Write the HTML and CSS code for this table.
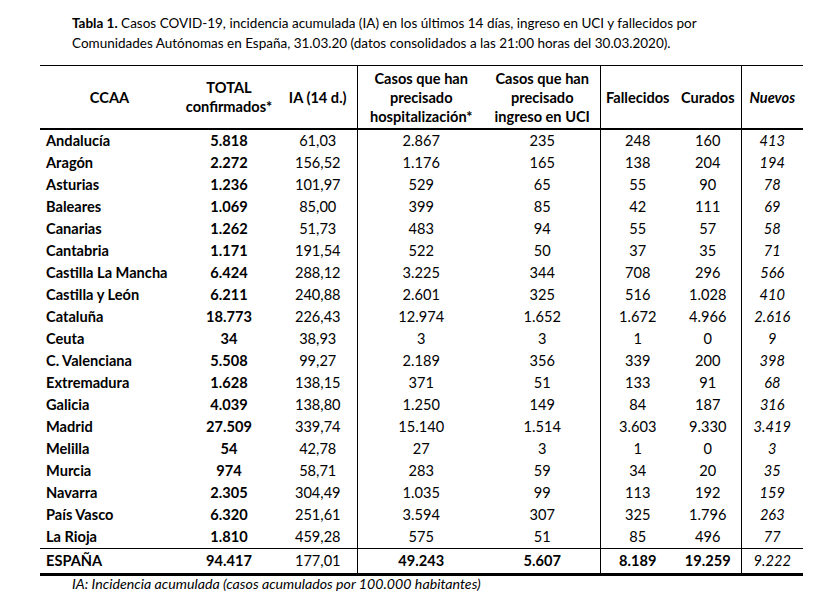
FILE: index.html
```html
<!DOCTYPE html>
<html lang="es">
<head>
<meta charset="utf-8">
<title>Tabla 1</title>
<link rel="stylesheet" href="styles.css">
</head>
<body>
<div class="page">
  <p class="caption"><b>Tabla 1.</b> Casos COVID-19, incidencia acumulada (IA) en los últimos 14 días, ingreso en UCI y fallecidos por<br>Comunidades Autónomas en España, 31.03.20 (datos consolidados a las 21:00 horas del 30.03.2020).</p>
  <table class="covid">
    <colgroup>
      <col class="c-ccaa"><col class="c-total"><col class="c-ia"><col class="c-hosp"><col class="c-uci"><col class="c-fall"><col class="c-cur"><col class="c-nue">
    </colgroup>
    <thead>
      <tr>
        <th>CCAA</th>
        <th>TOTAL<br>confirmados*</th>
        <th class="sep">IA (14 d.)</th>
        <th>Casos que han<br>precisado<br>hospitalización*</th>
        <th class="sep">Casos que han<br>precisado<br>ingreso en UCI</th>
        <th>Fallecidos</th>
        <th class="sep">Curados</th>
        <th class="nue">Nuevos</th>
      </tr>
    </thead>
    <tbody>
      <tr><td>Andalucía</td><td>5.818</td><td class="sep">61,03</td><td>2.867</td><td class="sep">235</td><td>248</td><td class="sep">160</td><td class="nue">413</td></tr>
      <tr><td>Aragón</td><td>2.272</td><td class="sep">156,52</td><td>1.176</td><td class="sep">165</td><td>138</td><td class="sep">204</td><td class="nue">194</td></tr>
      <tr><td>Asturias</td><td>1.236</td><td class="sep">101,97</td><td>529</td><td class="sep">65</td><td>55</td><td class="sep">90</td><td class="nue">78</td></tr>
      <tr><td>Baleares</td><td>1.069</td><td class="sep">85,00</td><td>399</td><td class="sep">85</td><td>42</td><td class="sep">111</td><td class="nue">69</td></tr>
      <tr><td>Canarias</td><td>1.262</td><td class="sep">51,73</td><td>483</td><td class="sep">94</td><td>55</td><td class="sep">57</td><td class="nue">58</td></tr>
      <tr><td>Cantabria</td><td>1.171</td><td class="sep">191,54</td><td>522</td><td class="sep">50</td><td>37</td><td class="sep">35</td><td class="nue">71</td></tr>
      <tr><td>Castilla La Mancha</td><td>6.424</td><td class="sep">288,12</td><td>3.225</td><td class="sep">344</td><td>708</td><td class="sep">296</td><td class="nue">566</td></tr>
      <tr><td>Castilla y León</td><td>6.211</td><td class="sep">240,88</td><td>2.601</td><td class="sep">325</td><td>516</td><td class="sep">1.028</td><td class="nue">410</td></tr>
      <tr><td>Cataluña</td><td>18.773</td><td class="sep">226,43</td><td>12.974</td><td class="sep">1.652</td><td>1.672</td><td class="sep">4.966</td><td class="nue">2.616</td></tr>
      <tr><td>Ceuta</td><td>34</td><td class="sep">38,93</td><td>3</td><td class="sep">3</td><td>1</td><td class="sep">0</td><td class="nue">9</td></tr>
      <tr><td>C. Valenciana</td><td>5.508</td><td class="sep">99,27</td><td>2.189</td><td class="sep">356</td><td>339</td><td class="sep">200</td><td class="nue">398</td></tr>
      <tr><td>Extremadura</td><td>1.628</td><td class="sep">138,15</td><td>371</td><td class="sep">51</td><td>133</td><td class="sep">91</td><td class="nue">68</td></tr>
      <tr><td>Galicia</td><td>4.039</td><td class="sep">138,80</td><td>1.250</td><td class="sep">149</td><td>84</td><td class="sep">187</td><td class="nue">316</td></tr>
      <tr><td>Madrid</td><td>27.509</td><td class="sep">339,74</td><td>15.140</td><td class="sep">1.514</td><td>3.603</td><td class="sep">9.330</td><td class="nue">3.419</td></tr>
      <tr><td>Melilla</td><td>54</td><td class="sep">42,78</td><td>27</td><td class="sep">3</td><td>1</td><td class="sep">0</td><td class="nue">3</td></tr>
      <tr><td>Murcia</td><td>974</td><td class="sep">58,71</td><td>283</td><td class="sep">59</td><td>34</td><td class="sep">20</td><td class="nue">35</td></tr>
      <tr><td>Navarra</td><td>2.305</td><td class="sep">304,49</td><td>1.035</td><td class="sep">99</td><td>113</td><td class="sep">192</td><td class="nue">159</td></tr>
      <tr><td>País Vasco</td><td>6.320</td><td class="sep">251,61</td><td>3.594</td><td class="sep">307</td><td>325</td><td class="sep">1.796</td><td class="nue">263</td></tr>
      <tr><td>La Rioja</td><td>1.810</td><td class="sep">459,28</td><td>575</td><td class="sep">51</td><td>85</td><td class="sep">496</td><td class="nue">77</td></tr>
    </tbody>
    <tfoot>
      <tr><td>ESPAÑA</td><td>94.417</td><td class="sep">177,01</td><td>49.243</td><td class="sep">5.607</td><td>8.189</td><td class="sep">19.259</td><td class="nue">9.222</td></tr>
    </tfoot>
  </table>
  <p class="note">IA: Incidencia acumulada (casos acumulados por 100.000 habitantes)</p>
</div>
</body>
</html>
```

FILE: styles.css
```css
html, body {
  margin: 0;
  padding: 0;
  background: #ffffff;
}

body {
  font-family: Lato, "Open Sans", "Liberation Sans", sans-serif;
  font-size: 14.6px;
  color: #000000;
}

.page {
  padding-top: 13px;
}

.caption {
  margin: 0 0 12px 72px;
  font-size: 13.5px;
  line-height: 20px;
}

.covid {
  margin-left: 40px;
  width: 763px;
  table-layout: fixed;
  border-collapse: collapse;
  border-top: 1px solid #000;
  border-bottom: 3px solid #000;
}

.c-ccaa { width: 139px; }
.c-total { width: 100px; }
.c-ia { width: 78px; }
.c-hosp { width: 128px; }
.c-uci { width: 115px; }
.c-fall { width: 75px; }
.c-cur { width: 66px; }
.c-nue { width: 62px; }

.covid th,
.covid td {
  padding: 0;
  text-align: center;
  white-space: nowrap;
}

.covid th {
  font-weight: 700;
  height: 62px;
  line-height: 19px;
  vertical-align: middle;
  border-bottom: 2px solid #000;
}

.covid td {
  height: 22px;
  line-height: 22px;
}

.covid td:first-child {
  text-align: left;
  padding-left: 6px;
  font-weight: 700;
}

.covid td:nth-child(2) {
  font-weight: 700;
}

.covid .sep {
  border-right: 1px solid #000;
}

.covid .nue {
  font-style: italic;
}

.covid tfoot td {
  height: 24px;
  line-height: 24px;
  font-weight: 700;
  border-top: 1px solid #000;
}

.covid tfoot td.sep:nth-child(3),
.covid tfoot td.nue {
  font-weight: 400;
}

.note {
  margin: 0 0 0 72px;
  font-size: 14.2px;
  font-style: italic;
  line-height: 16px;
}
```
